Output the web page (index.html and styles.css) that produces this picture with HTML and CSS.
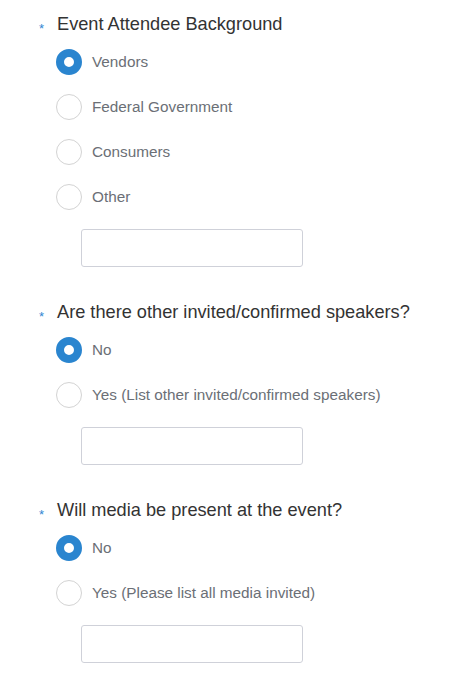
FILE: index.html
```html
<!DOCTYPE html>
<html>
<head>
<meta charset="utf-8">
<link rel="stylesheet" href="styles.css">
</head>
<body>
<form class="form">
  <div class="question">
    <div class="q-title"><span class="req">*</span><span class="q-text">Event Attendee Background</span></div>
    <div class="options">
      <label class="option"><span class="radio checked"></span><span class="opt-text">Vendors</span></label>
      <label class="option"><span class="radio"></span><span class="opt-text">Federal Government</span></label>
      <label class="option"><span class="radio"></span><span class="opt-text">Consumers</span></label>
      <label class="option"><span class="radio"></span><span class="opt-text">Other</span></label>
    </div>
    <input class="text-input" type="text">
  </div>
  <div class="question">
    <div class="q-title"><span class="req">*</span><span class="q-text">Are there other invited/confirmed speakers?</span></div>
    <div class="options">
      <label class="option"><span class="radio checked"></span><span class="opt-text">No</span></label>
      <label class="option"><span class="radio"></span><span class="opt-text">Yes (List other invited/confirmed speakers)</span></label>
    </div>
    <input class="text-input" type="text">
  </div>
  <div class="question">
    <div class="q-title"><span class="req">*</span><span class="q-text">Will media be present at the event?</span></div>
    <div class="options">
      <label class="option"><span class="radio checked"></span><span class="opt-text">No</span></label>
      <label class="option"><span class="radio"></span><span class="opt-text">Yes (Please list all media invited)</span></label>
    </div>
    <input class="text-input" type="text">
  </div>
</form>
</body>
</html>
```
FILE: styles.css
```css
html, body {
  margin: 0;
  padding: 0;
  background: #ffffff;
}
body {
  font-family: "Liberation Sans", Arial, sans-serif;
}
.form {
  display: flex;
  flex-direction: column;
  gap: 33px;
  padding: 12px 0 0 38px;
}
.question {
  display: flex;
  flex-direction: column;
}
.q-title {
  display: flex;
  align-items: center;
  height: 24px;
}
.req {
  width: 19px;
  color: #2f86d2;
  font-size: 13px;
  line-height: 13px;
  padding-top: 8px;
  padding-left: 1px;
  box-sizing: border-box;
}
.q-text {
  font-size: 18.2px;
  color: #333333;
}
.options {
  display: flex;
  flex-direction: column;
  margin-top: 3px;
  padding-left: 18px;
}
.option {
  display: flex;
  align-items: center;
  height: 45px;
  gap: 10px;
}
.radio {
  width: 26px;
  height: 26px;
  box-sizing: border-box;
  border-radius: 50%;
  border: 1px solid #d3d3d3;
  background: #ffffff;
}
.radio.checked {
  border: 8px solid #2a85cf;
}
.opt-text {
  font-size: 15.3px;
  color: #6b6f76;
}
.text-input {
  margin: 10px 0 0 43px;
  width: 222px;
  height: 38px;
  box-sizing: border-box;
  border: 1px solid #cfd1d9;
  border-radius: 3px;
  background: #ffffff;
  outline: none;
}
```
